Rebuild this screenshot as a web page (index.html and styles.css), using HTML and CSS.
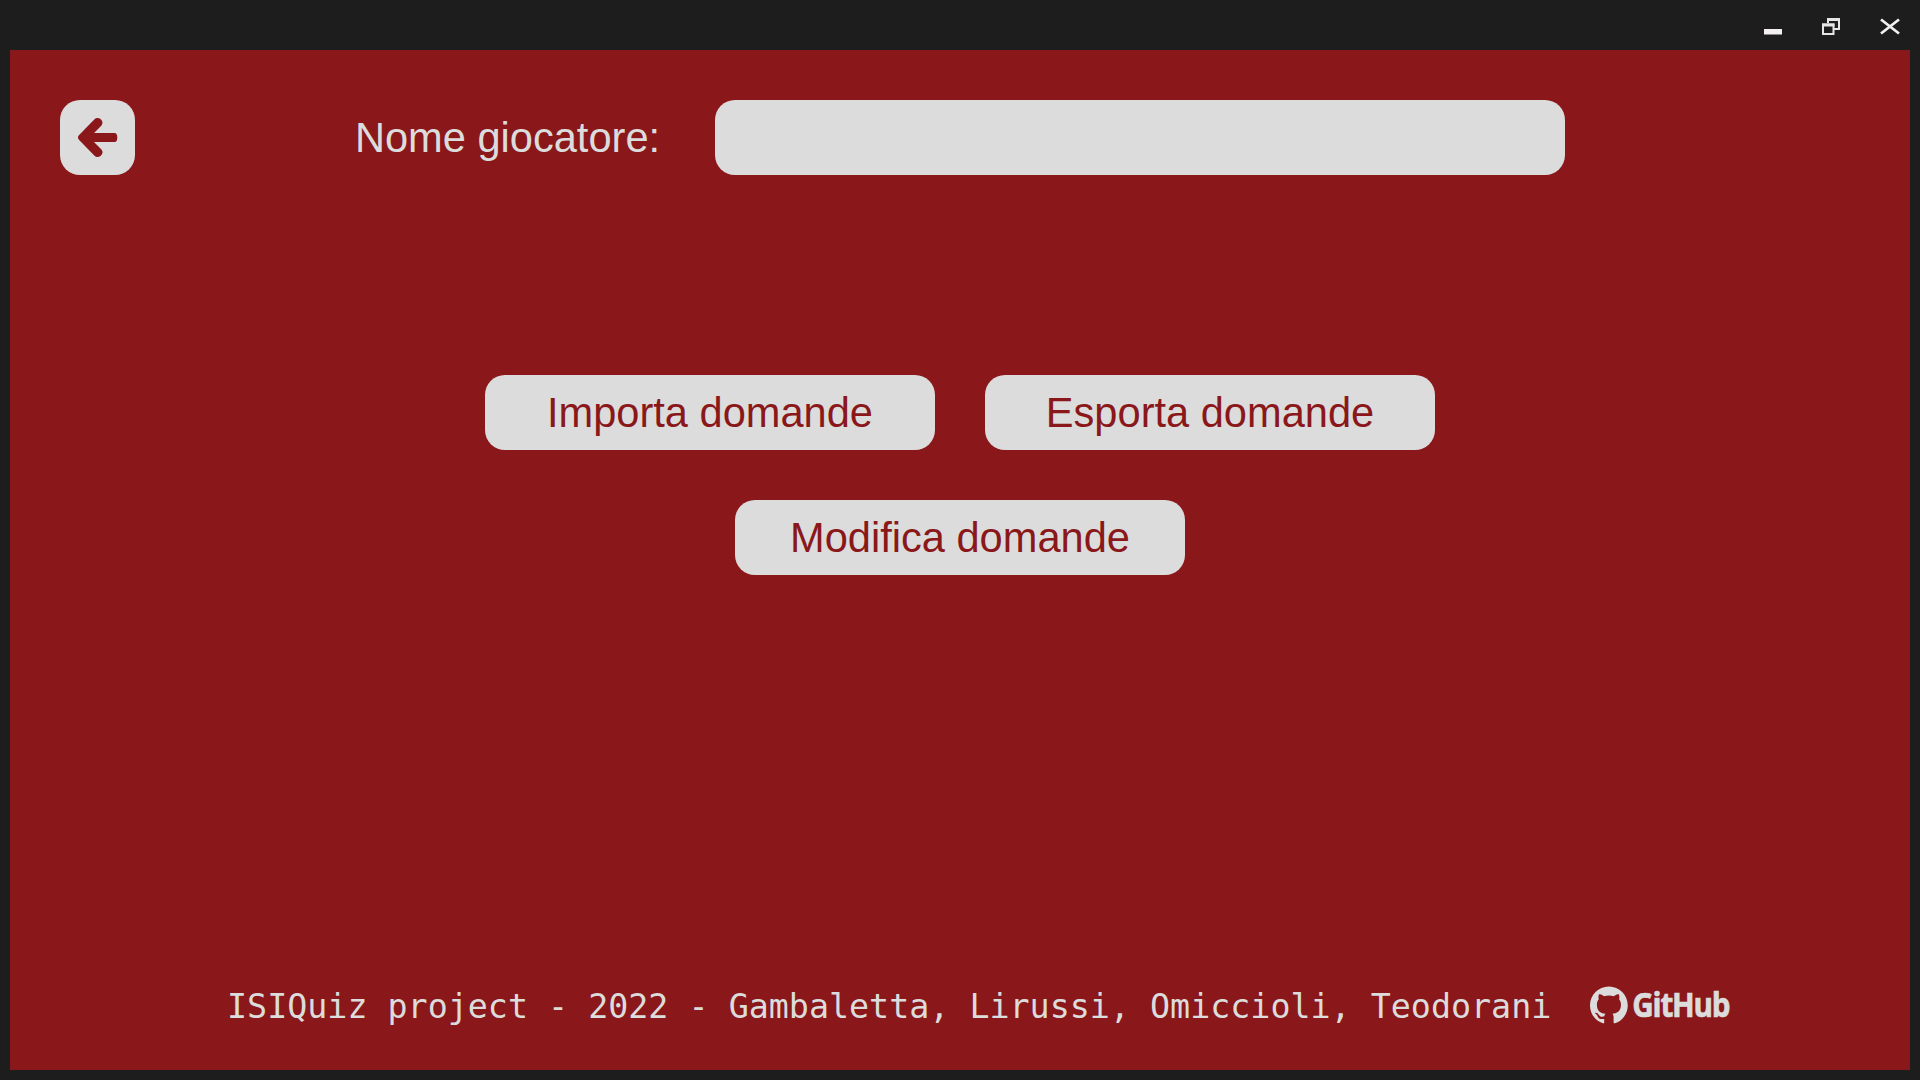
FILE: index.html
```
<!DOCTYPE html>
<html lang="it">
<head>
<meta charset="utf-8">
<title>ISIQuiz</title>
<link rel="stylesheet" href="styles.css">
</head>
<body>
<div class="window">
  <div class="titlebar">
    <svg class="control" viewBox="0 0 30 30"><path fill="#f3eff2" d="M6 17h18v5.500H6z"/></svg>
    <svg class="control" viewBox="0 0 30 30"><g fill="none" stroke="#e6e6e6" stroke-width="2"><path d="M12 11V7h11v10h-5"/><path d="M7 12.500h10.500v9.500H7z"/><path d="M11 7.500h13M6 13h12.500" stroke-width="3"/></g></svg>
    <svg class="control" viewBox="0 0 30 30"><path fill="none" stroke="#f0f0f0" stroke-width="2.800" d="M7 7.500 25 21.500M25 7.500 7 21.500"/></svg>
  </div>
  <main class="screen">
    <header class="header">
      <button class="back" aria-label="Indietro">
        <svg viewBox="0 0 75 75"><path fill="#8a181a" d="M34 33 41.500 25.500Q43.400 23.200 42 20.800 40.600 18.200 38 18 36 17.700 34.500 19.200L18.900 35.300Q17 37.500 18.900 39.700L34.500 55.800Q36 57.300 38 57 40.600 56.800 42 54.200 43.400 51.800 41.500 49.500L34 42H54.500Q57.300 42 57.300 37.500 57.300 33 54.500 33Z"/></svg>
      </button>
      <label class="label" for="player">Nome giocatore:</label>
      <input class="field" id="player" type="text">
    </header>
    <section class="actions">
      <div class="row">
        <button class="action">Importa domande</button>
        <button class="action">Esporta domande</button>
      </div>
      <div class="row">
        <button class="action">Modifica domande</button>
      </div>
    </section>
    <footer class="footer">
      <span class="credits">ISIQuiz project - 2022 - Gambaletta, Lirussi, Omiccioli, Teodorani</span>
      <svg class="github" viewBox="0 0 142 40">
        <path transform="translate(0 1.500) scale(2.360)" d="M8 0C3.580 0 0 3.580 0 8c0 3.540 2.290 6.530 5.470 7.590.4.070.55-.17.55-.38 0-.19-.01-.82-.01-1.490-2.010.37-2.530-.49-2.690-.94-.09-.23-.48-.94-.82-1.130-.28-.15-.68-.52-.01-.53.63-.01 1.080.58 1.230.82.72 1.210 1.870.87 2.330.66.07-.52.28-.87.51-1.070-1.780-.2-3.640-.89-3.640-3.950 0-.87.31-1.590.82-2.150-.08-.2-.36-1.020.08-2.120 0 0 .67-.21 2.200.82.64-.18 1.320-.27 2-.27s1.360.09 2 .27c1.530-1.040 2.200-.82 2.200-.82.44 1.100.16 1.920.08 2.120.51.56.82 1.270.82 2.150 0 3.070-1.870 3.750-3.650 3.950.29.25.54.73.54 1.480 0 1.070-.01 1.930-.01 2.200 0 .21.15.46.55.38A8.010 8.010 0 0 0 16 8c0-4.420-3.580-8-8-8z"/>
        <text class="wordmark" transform="translate(42.300 32) scale(.86 1)">GitHub</text>
      </svg>
    </footer>
  </main>
</div>
</body>
</html>
```
FILE: styles.css
```
* { box-sizing: border-box; }

body {
  margin: 0;
  background: #1d1d1d;
  font-family: "Liberation Sans", Arial, sans-serif;
}

.window {
  display: flex;
  flex-direction: column;
  height: 100vh;
  padding: 0 10px 10px;
}

.titlebar {
  display: flex;
  justify-content: flex-end;
  align-items: center;
  gap: 28px;
  height: 50px;
  padding: 4px 6px 0 0;
}

.control { width: 30px; height: 30px; }

.screen {
  flex: 1;
  display: flex;
  flex-direction: column;
  padding: 50px 50px 35px;
  background: #8a181a;
  color: #dcdcdc;
}

.header { display: flex; align-items: center; height: 75px; }

.back {
  width: 75px;
  height: 75px;
  padding: 0;
  border: 0;
  border-radius: 20px;
  background: #dcdcdc;
}

.back svg { display: block; width: 75px; height: 75px; }

.label {
  width: 415px;
  margin-left: 165px;
  font-size: 41.6px;
  line-height: 49px;
  text-align: center;
}

.field {
  width: 850px;
  height: 75px;
  padding: 0 20px;
  border: 0;
  border-radius: 20px;
  background: #dcdcdc;
  color: #8a181a;
  font: inherit;
  font-size: 41.6px;
}

.actions {
  flex: 1;
  display: flex;
  flex-direction: column;
  gap: 50px;
  padding-top: 200px;
}

.row { display: flex; justify-content: center; gap: 50px; }

.action {
  width: 450px;
  height: 75px;
  padding: 0;
  border: 0;
  border-radius: 20px;
  background: #dcdcdc;
  color: #8a181a;
  font: inherit;
  font-size: 41.6px;
  line-height: 49px;
}

.footer {
  display: flex;
  align-items: center;
  gap: 39px;
  height: 60px;
  padding-left: 167px;
}

.credits {
  padding-top: 2px;
  font-family: "DejaVu Sans Mono", monospace;
  font-size: 33.33px;
  white-space: pre;
}

.github { width: 142px; height: 40px; fill: #dcdcdc; overflow: visible; }

.wordmark {
  font-family: "Open Sans", sans-serif;
  font-size: 34.5px;
  font-weight: 700;
  letter-spacing: -1.4px;
  stroke: #dcdcdc;
  stroke-width: 0.7px;
}
```
